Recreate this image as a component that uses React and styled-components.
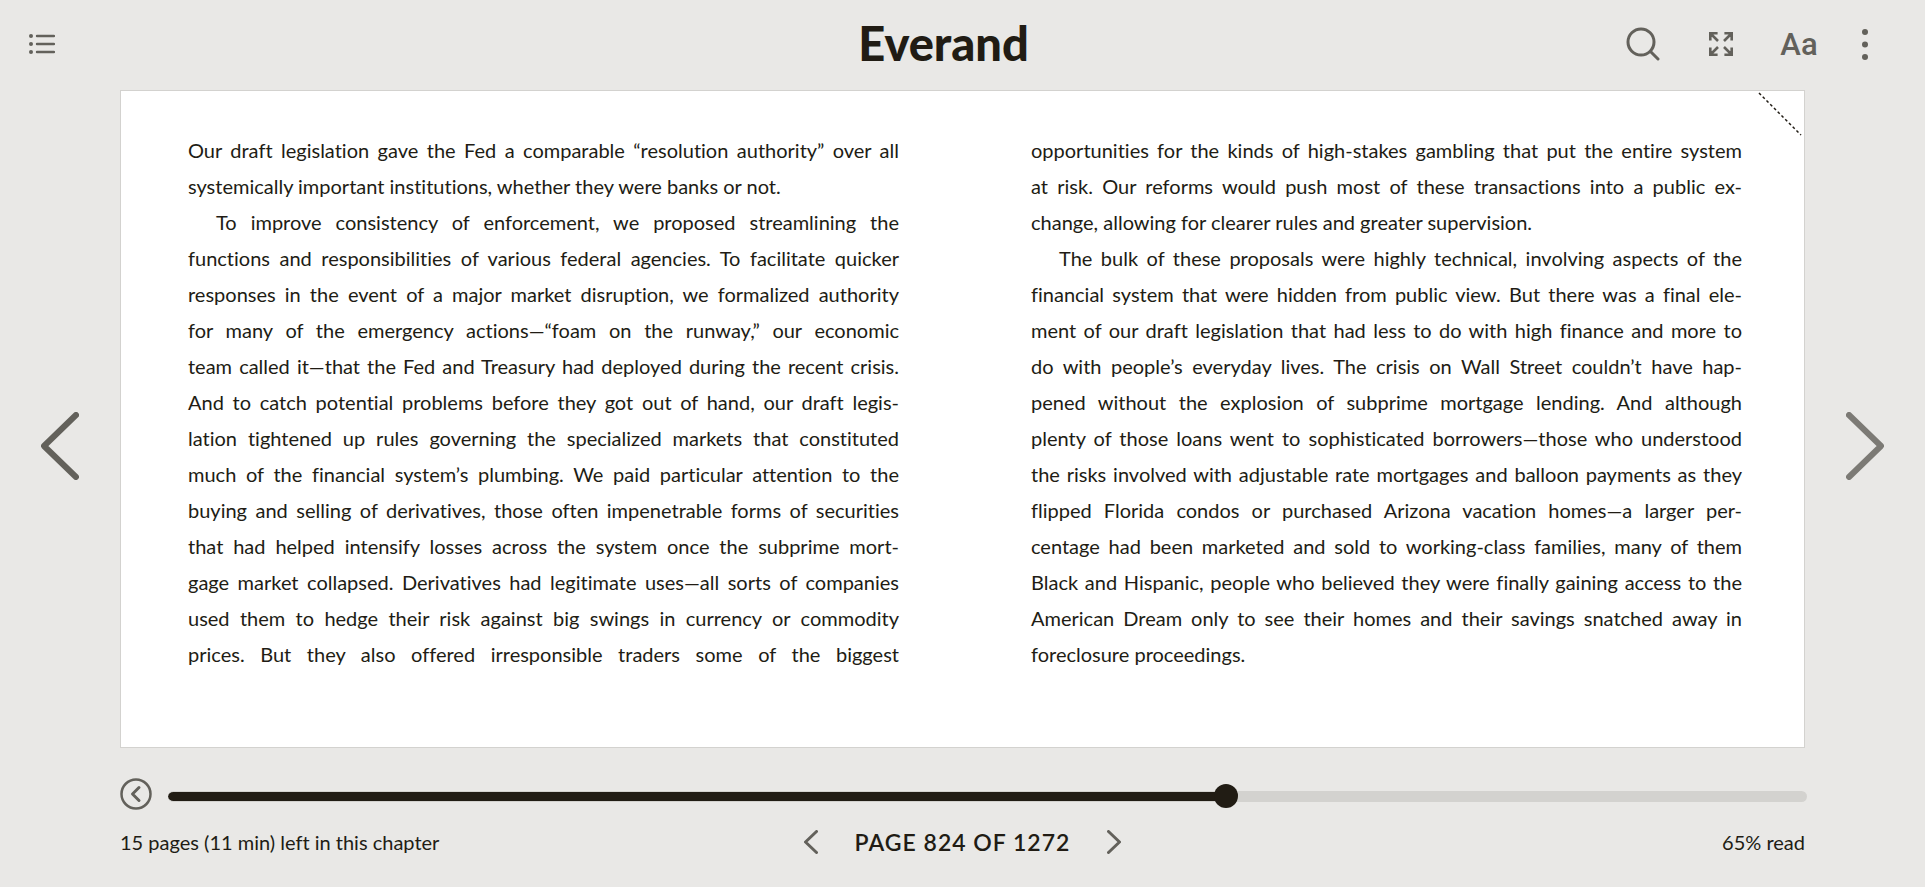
import React, { useState } from 'react';
import styled, { createGlobalStyle } from 'styled-components';

const ink = '#211c14';
const grey = '#63615b';
const line = '#d3d2cf';

const GlobalStyle = createGlobalStyle`
  *, *::before, *::after { box-sizing: border-box; }
  body {
    margin: 0;
    background: #e9e8e6;
    color: ${ink};
    font-family: Lato, "Liberation Sans", sans-serif;
    font-variant-ligatures: none;
  }
`;

const Reader = styled.div`
  display: flex;
  flex-direction: column;
  min-height: 100vh;
`;

const Toolbar = styled.header`
  display: grid;
  grid-template-columns: 1fr auto 1fr;
  align-items: center;
  height: 88px;
  margin-bottom: 2px;
  padding: 0 46px 0 16px;
`;

const Logo = styled.a`
  color: ${ink};
  font-size: 47px;
  font-weight: 900;
  line-height: 56px;
  padding: 0 8px 2px 0;
  text-decoration: none;
`;

const Tools = styled.div`
  display: flex;
  justify-content: flex-end;
  align-items: center;
  gap: 26px;
`;

const IconButton = styled.button`
  display: flex;
  align-items: center;
  justify-content: center;
  width: ${({ $width }) => $width || 52}px;
  height: 48px;
  padding: 0;
  border: 0;
  background: none;
  color: ${grey};
  font: 500 31px Roboto, sans-serif;
  cursor: pointer;
`;

const Icon = styled.svg`
  display: block;
  flex: none;
  fill: none;
  stroke: currentColor;
  stroke-linecap: ${({ $square }) => ($square ? 'butt' : 'round')};
  stroke-linejoin: ${({ $square }) => ($square ? 'miter' : 'round')};
`;

const Spread = styled.main`
  display: grid;
  grid-template-columns: 120px minmax(0, 1fr) 120px;
`;

const TurnButton = styled.button`
  display: flex;
  align-items: center;
  justify-content: center;
  padding: 54px 0 0;
  border: 0;
  background: none;
  color: ${({ $soft }) => ($soft ? '#7c7a75' : grey)};
  cursor: pointer;
`;

const Book = styled.article`
  position: relative;
  display: grid;
  grid-template-columns: repeat(2, minmax(0, 1fr));
  column-gap: 132px;
  min-height: 658px;
  padding: 41px 62px 73px 67px;
  border: 1px solid ${line};
  background: #fff;
`;

const Bookmark = styled.button`
  position: absolute;
  top: 0;
  right: 0;
  padding: 0;
  border: 0;
  background: none;
  color: ${ink};
  cursor: pointer;
`;

const Paragraph = styled.p`
  margin: 0;
  font-size: 20px;
  line-height: 36px;
`;

const Line = styled.span`
  display: block;
  white-space: nowrap;
  text-align-last: ${({ $end }) => ($end ? 'left' : 'justify')};
  padding-left: ${({ $indent }) => ($indent ? 28 : 0)}px;
`;

const Footer = styled.footer`
  padding: 22px 118px 0 120px;
`;

const Progress = styled.div`
  display: flex;
  align-items: center;
  gap: 16px;
`;

const Slider = styled.input`
  appearance: none;
  flex: 1;
  min-width: 0;
  height: 24px;
  margin: 4px 0 0;
  background: none;
  cursor: pointer;

  &::-webkit-slider-runnable-track {
    height: 11px;
    border: 1px solid ${line};
    border-left: 0;
    border-radius: 6px;
    background: linear-gradient(to right, ${ink} ${({ $filled }) => $filled}%, ${line} 0);
  }

  &::-webkit-slider-thumb {
    appearance: none;
    width: 24px;
    height: 24px;
    margin-top: -8px;
    border-radius: 50%;
    background: ${ink};
  }
`;

const Status = styled.div`
  display: grid;
  grid-template-columns: 1fr auto 1fr;
  align-items: center;
  height: 48px;
  padding-right: 2px;
`;

const Note = styled.span`
  font-size: 20px;
  line-height: 24px;
  text-align: ${({ $end }) => ($end ? 'right' : 'left')};
`;

const Pager = styled.nav`
  display: flex;
  align-items: center;
  gap: 24px;
`;

const PageLabel = styled.span`
  font-size: 23px;
  font-weight: 600;
  line-height: 28px;
  letter-spacing: 1px;
`;

const LEFT = [
  [
    'Our draft legislation gave the Fed a comparable “resolution authority” over all',
    'systemically important institutions, whether they were banks or not.',
  ],
  [
    'To improve consistency of enforcement, we proposed streamlining the',
    'functions and responsibilities of various federal agencies. To facilitate quicker',
    'responses in the event of a major market disruption, we formalized authority',
    'for many of the emergency actions—“foam on the runway,” our economic',
    'team called it—that the Fed and Treasury had deployed during the recent crisis.',
    'And to catch potential problems before they got out of hand, our draft legis-',
    'lation tightened up rules governing the specialized markets that constituted',
    'much of the financial system’s plumbing. We paid particular attention to the',
    'buying and selling of derivatives, those often impenetrable forms of securities',
    'that had helped intensify losses across the system once the subprime mort-',
    'gage market collapsed. Derivatives had legitimate uses—all sorts of companies',
    'used them to hedge their risk against big swings in currency or commodity',
    'prices. But they also offered irresponsible traders some of the biggest',
  ],
];

const RIGHT = [
  [
    'opportunities for the kinds of high-stakes gambling that put the entire system',
    'at risk. Our reforms would push most of these transactions into a public ex-',
    'change, allowing for clearer rules and greater supervision.',
  ],
  [
    'The bulk of these proposals were highly technical, involving aspects of the',
    'financial system that were hidden from public view. But there was a final ele-',
    'ment of our draft legislation that had less to do with high finance and more to',
    'do with people’s everyday lives. The crisis on Wall Street couldn’t have hap-',
    'pened without the explosion of subprime mortgage lending. And although',
    'plenty of those loans went to sophisticated borrowers—those who understood',
    'the risks involved with adjustable rate mortgages and balloon payments as they',
    'flipped Florida condos or purchased Arizona vacation homes—a larger per-',
    'centage had been marketed and sold to working-class families, many of them',
    'Black and Hispanic, people who believed they were finally gaining access to the',
    'American Dream only to see their homes and their savings snatched away in',
    'foreclosure proceedings.',
  ],
];

function Column({ paragraphs, continues }) {
  return (
    <section>
      {paragraphs.map((lines, p) => (
        <Paragraph key={lines[0]}>
          {lines.map((text, i) => {
            const last = i === lines.length - 1;
            const runsOn = continues && p === paragraphs.length - 1;
            return (
              <Line key={text} $indent={p > 0 && i === 0} $end={last && !runsOn}>
                {text}
              </Line>
            );
          })}
        </Paragraph>
      ))}
    </section>
  );
}

function Chevron({ flip, width, height, stroke }) {
  const near = stroke / 2;
  const far = width - near;
  const [tip, tail] = flip ? [far, near] : [near, far];
  return (
    <Icon width={width} height={height} strokeWidth={stroke} aria-hidden="true">
      <path d={`M${tail} ${near} L${tip} ${height / 2} L${tail} ${height - near}`} />
    </Icon>
  );
}

export default function App() {
  const total = 1272;
  const [page, setPage] = useState(824);
  const turn = (step) => setPage((p) => Math.min(total, Math.max(1, p + step)));
  const percent = Math.round((page / total) * 100);

  return (
    <Reader>
      <GlobalStyle />
      <Toolbar>
        <IconButton aria-label="Table of contents">
          <Icon width="26" height="20" viewBox="0 0 26 20" aria-hidden="true">
            <g fill="currentColor" stroke="none">
              <circle cx="2" cy="2" r="2" />
              <circle cx="2" cy="10" r="2" />
              <circle cx="2" cy="18" r="2" />
            </g>
            <path strokeWidth="2.400" d="M8 2H25M8 10H25M8 18H25" />
          </Icon>
        </IconButton>
        <Logo href="#">Everand</Logo>
        <Tools>
          <IconButton aria-label="Search">
            <Icon width="34" height="34" viewBox="0 0 34 34" strokeWidth="3" aria-hidden="true">
              <circle cx="15" cy="15" r="13" />
              <path d="M24.500 24.500L32 32" />
            </Icon>
          </IconButton>
          <IconButton aria-label="Full screen">
            <Icon $square width="24" height="24" viewBox="0 0 24 24" strokeWidth="2.600" aria-hidden="true">
              <path d="M1.300 8.600V1.300H8.600M1.500 1.500L9 9M15.400 1.300H22.700V8.600M22.500 1.500L15 9M1.300 15.400V22.700H8.600M1.500 22.500L9 15M15.400 22.700H22.700V15.400M22.500 22.500L15 15" />
            </Icon>
          </IconButton>
          <IconButton aria-label="Display settings">Aa</IconButton>
          <IconButton $width={28} aria-label="More options">
            <Icon width="6" height="31" viewBox="0 0 6 31" aria-hidden="true">
              <g fill="currentColor" stroke="none">
                <circle cx="3" cy="3" r="3" />
                <circle cx="3" cy="15.500" r="3" />
                <circle cx="3" cy="28" r="3" />
              </g>
            </Icon>
          </IconButton>
        </Tools>
      </Toolbar>

      <Spread>
        <TurnButton aria-label="Turn back" onClick={() => turn(-1)}>
          <Chevron width={38} height={68} stroke={6} />
        </TurnButton>
        <Book>
          <Column paragraphs={LEFT} continues />
          <Column paragraphs={RIGHT} />
          <Bookmark aria-label="Add bookmark">
            <Icon $square width="46" height="46" viewBox="0 0 46 46" aria-hidden="true">
              <path d="M1 2L43 44" strokeWidth="1.500" strokeDasharray="2.800 2.500" />
            </Icon>
          </Bookmark>
        </Book>
        <TurnButton $soft aria-label="Turn forward" onClick={() => turn(1)}>
          <Chevron flip width={38} height={68} stroke={6} />
        </TurnButton>
      </Spread>

      <Footer>
        <Progress>
          <IconButton $width={32} aria-label="Back to last position">
            <Icon width="32" height="32" viewBox="0 0 32 32" aria-hidden="true">
              <circle cx="16" cy="16" r="14.500" strokeWidth="2.500" />
              <path d="M19 9.500L12.500 16L19 22.500" strokeWidth="3" />
            </Icon>
          </IconButton>
          <Slider
            type="range"
            min="0"
            max={total}
            value={page}
            $filled={(page / total) * 100}
            onChange={(e) => setPage(Number(e.target.value))}
            aria-label="Position in book"
          />
        </Progress>
        <Status>
          <Note>15 pages (11 min) left in this chapter</Note>
          <Pager aria-label="Pages">
            <IconButton $width={40} aria-label="Previous page" onClick={() => turn(-1)}>
              <Chevron width={14} height={24} stroke={3} />
            </IconButton>
            <PageLabel>
              PAGE {page} OF {total}
            </PageLabel>
            <IconButton $width={40} aria-label="Next page" onClick={() => turn(1)}>
              <Chevron flip width={14} height={24} stroke={3} />
            </IconButton>
          </Pager>
          <Note $end>{percent}% read</Note>
        </Status>
      </Footer>
    </Reader>
  );
}
